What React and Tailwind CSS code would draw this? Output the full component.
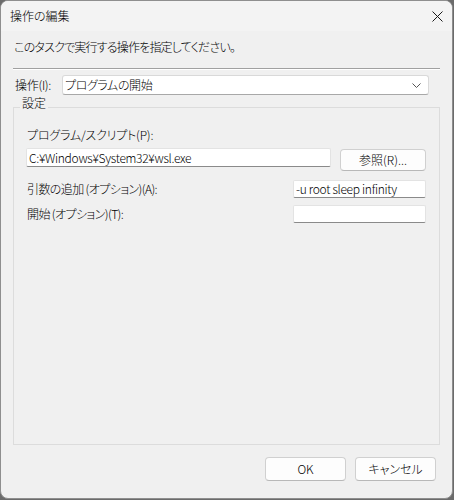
import React from "react";

function Input({ className = "", value = "" }) {
  return (
    <div
      className={
        "bg-white border border-[#e3e3e3] border-b-[#8a8a8a] rounded-[2px] flex items-center pl-[2px] text-[12px] leading-[14px] text-black whitespace-nowrap overflow-hidden tracking-[-0.3px] " +
        className
      }
    >
      {value}
    </div>
  );
}

function Button({ children, className = "" }) {
  return (
    <div
      className={
        "bg-[#fdfdfd] border border-[#d0d0d0] border-b-[#b8b8b8] rounded-[4px] flex items-center justify-center text-[12px] leading-[14px] text-black " +
        className
      }
    >
      {children}
    </div>
  );
}

export default function App() {
  return (
    <div className="w-[454px] h-[500px] bg-[#6b6b6b] font-['Noto_Sans_CJK_JP',sans-serif] font-light [font-feature-settings:'palt'] text-black">
      <div className="w-[453px] h-[499px] rounded-[8px] border border-[#8e8e8e] bg-[#f0f0f0] overflow-hidden flex flex-col">
        {/* Title bar */}
        <div className="h-[30px] bg-[#f3f3f3] flex items-center justify-between pl-[9px] pr-[9px] shrink-0">
          <span className="text-[12px] leading-[14px]">操作の編集</span>
          <svg width="11" height="11" viewBox="0 0 11 11">
            <path d="M0.5 0.5 L10.5 10.5 M10.5 0.5 L0.5 10.5" stroke="#1a1a1a" strokeWidth="1" fill="none" />
          </svg>
        </div>

        {/* Body */}
        <div className="flex-1 flex flex-col pl-[12px] pr-[12px] min-h-0">
          <div className="mt-[8px] text-[12px] leading-[16px] pl-[1px] tracking-[-0.8px]">
            このタスクで実行する操作を指定してください。
          </div>
          <div className="mt-[13px] border-t border-t-[#a0a0a0] border-b border-b-white h-[2px]" />

          <div className="mt-[5px] flex items-center pl-[2px]">
            <span className="text-[12px] leading-[14px] w-[47px] tracking-[-0.3px]">操作(I):</span>
            <div className="w-[367px] h-[20px] bg-white border border-[#d9d9d9] border-b-[#a8a8a8] rounded-[3px] flex items-center justify-between pl-[2px] pr-[7px]">
              <span className="text-[12px] leading-[14px] tracking-[-0.4px]">プログラムの開始</span>
              <svg width="9" height="5" viewBox="0 0 9 5">
                <path d="M0.5 0.5 L4.5 4.5 L8.5 0.5" stroke="#555" strokeWidth="1" fill="none" />
              </svg>
            </div>
          </div>

          <fieldset className="mt-[2px] flex-1 min-h-0 border border-[#dcdcdc] p-0 m-0">
            <legend className="ml-[6px] px-[2px] text-[12px] leading-[12px] pb-[8px]">設定</legend>
            <div className="pl-[12px] pr-[13px] flex flex-col">
              <div className="mt-[10px] text-[12px] leading-[16px] pl-[1px] tracking-[-0.2px]">プログラム/スクリプト(P):</div>
              <div className="mt-[5px] flex items-start justify-between">
                <Input className="w-[305px] h-[19px]" value="C:¥Windows¥System32¥wsl.exe" />
                <Button className="w-[86px] h-[22px] mt-[1px]">参照(R)...</Button>
              </div>
              <div className="mt-[9px] flex items-center justify-between">
                <span className="text-[12px] leading-[14px] pl-[1px] tracking-[-0.6px]">引数の追加 (オプション)(A):</span>
                <Input className="w-[133px] h-[18px]" value="-u root sleep infinity" />
              </div>
              <div className="mt-[7px] flex items-center justify-between">
                <span className="text-[12px] leading-[14px] pl-[1px] tracking-[-0.6px]">開始 (オプション)(T):</span>
                <Input className="w-[133px] h-[18px]" value="" />
              </div>
            </div>
          </fieldset>

          <div className="mt-[12px] mb-[17px] flex justify-end gap-[9px] pr-[4px]">
            <Button className="w-[81px] h-[24px] border-[#0067c0] border-b-[#0067c0]">OK</Button>
            <Button className="w-[81px] h-[24px]">キャンセル</Button>
          </div>
        </div>
      </div>
    </div>
  );
}
